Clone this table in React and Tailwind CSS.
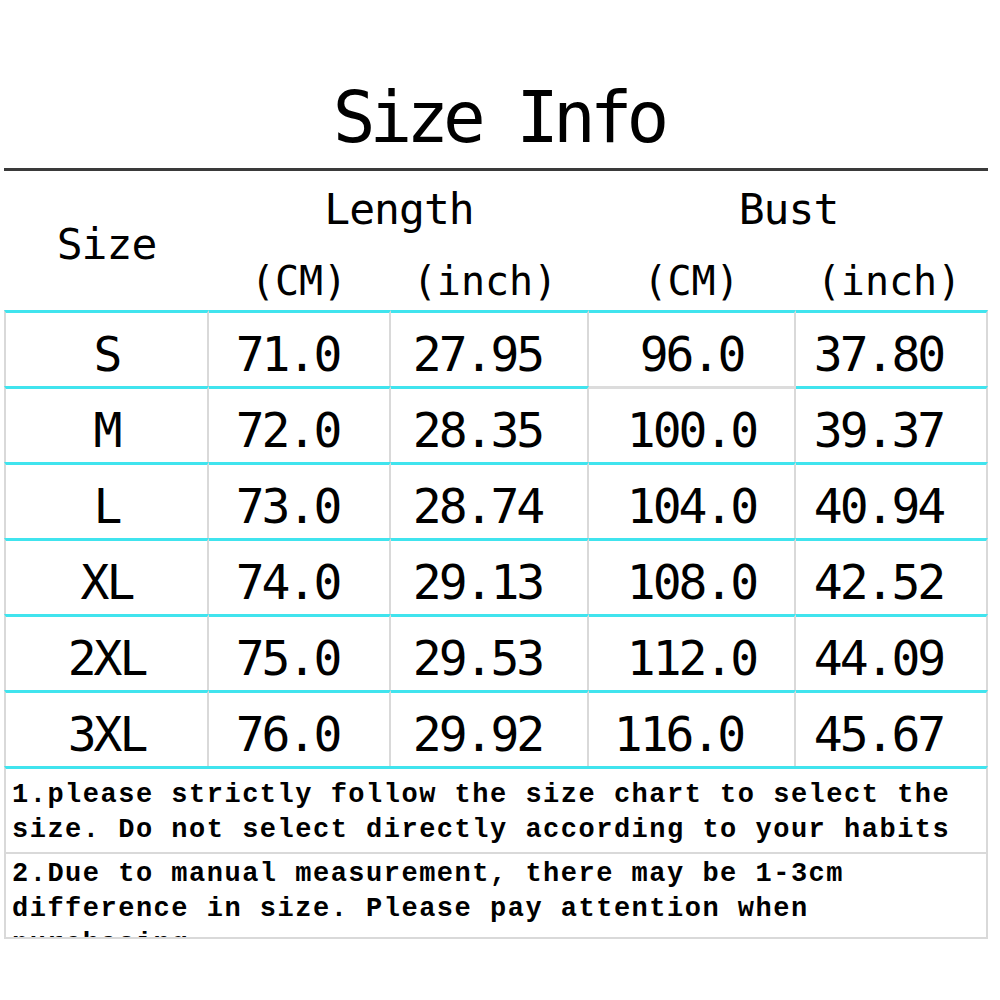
const rows = [
  ["S", "71.0", "27.95", "96.0", "37.80"],
  ["M", "72.0", "28.35", "100.0", "39.37"],
  ["L", "73.0", "28.74", "104.0", "40.94"],
  ["XL", "74.0", "29.13", "108.0", "42.52"],
  ["2XL", "75.0", "29.53", "112.0", "44.09"],
  ["3XL", "76.0", "29.92", "116.0", "45.67"],
];

const cellBase =
  "h-[76px] flex items-center justify-center pt-[8px] border-t-[3px] border-[#d9d9d9] text-[48px] leading-[48px] tracking-[-3px] text-black whitespace-nowrap";

export default function App() {
  return (
    <div className="w-[1000px] h-[1000px] bg-white font-['DejaVu_Sans_Mono',monospace] text-black">
      {/* Title */}
      <div className="h-[168px] pt-[82px] pr-[4px] text-center text-[71px] leading-[72px] tracking-[-6px]">
        Size Info
      </div>
      <div className="ml-[4px] w-[984px] h-[3px] bg-[#3a3a3a]" />

      {/* Header */}
      <div className="ml-[4px] w-[984px] h-[139px] grid grid-cols-[205px_182px_198px_207px_192px] grid-rows-[90px_49px]">
        <div className="row-span-2 pt-[52px] text-center text-[43px] leading-[43px] tracking-[-1px]">Size</div>
        <div className="col-span-2 pt-[17px] text-center text-[43px] leading-[43px] tracking-[-1px]">Length</div>
        <div className="col-span-2 pt-[17px] text-center text-[43px] leading-[43px] tracking-[-1px]">Bust</div>
        <div className="text-center text-[40px] leading-[40px] pr-[2px]">(CM)</div>
        <div className="text-center text-[40px] leading-[40px] pr-[10px]">(inch)</div>
        <div className="text-center text-[40px] leading-[40px] pr-[2px]">(CM)</div>
        <div className="text-center text-[40px] leading-[40px] pr-[6px]">(inch)</div>
      </div>

      {/* Data rows */}
      <div className="ml-[4px] w-[984px]">
        {rows.map((r, i) => (
          <div key={i} className="grid grid-cols-[205px_182px_198px_207px_192px]">
            <div className={`${cellBase} border-t-[#40e4ee] border-l-2 border-r-2`}>{r[0]}</div>
            <div className={`${cellBase} border-t-[#40e4ee] border-r-2 pr-[23px]`}>{r[1]}</div>
            <div className={`${cellBase} border-t-[#40e4ee] border-r-2 pr-[23px]`}>{r[2]}</div>
            <div
              className={`${cellBase} border-r-2 ${i === 1 ? "border-t-[#dcdcdc]" : "border-t-[#40e4ee]"} ${i === 5 ? "pr-[26px]" : ""}`}
            >
              {r[3]}
            </div>
            <div className={`${cellBase} border-t-[#40e4ee] border-r-2 pr-[25px]`}>{r[4]}</div>
          </div>
        ))}

        {/* Notes */}
        <div className="h-[86px] border-t-[3px] border-t-[#40e4ee] border-x-2 border-x-[#d9d9d9] pl-[6px] pt-[9px] overflow-hidden font-['Liberation_Mono',monospace] font-bold text-[27px] leading-[35px] tracking-[1.5px] whitespace-nowrap">
          <div>1.please strictly follow the size chart to select the</div>
          <div>size. Do not select directly according to your habits</div>
        </div>
        <div className="h-[87px] border-2 border-[#d9d9d9] pl-[6px] pt-[3px] overflow-hidden font-['Liberation_Mono',monospace] font-bold text-[27px] leading-[35px] tracking-[1.5px] whitespace-nowrap">
          <div>2.Due to manual measurement, there may be 1-3cm</div>
          <div>difference in size. Please pay attention when</div>
          <div>purchasing.</div>
        </div>
      </div>
    </div>
  );
}
